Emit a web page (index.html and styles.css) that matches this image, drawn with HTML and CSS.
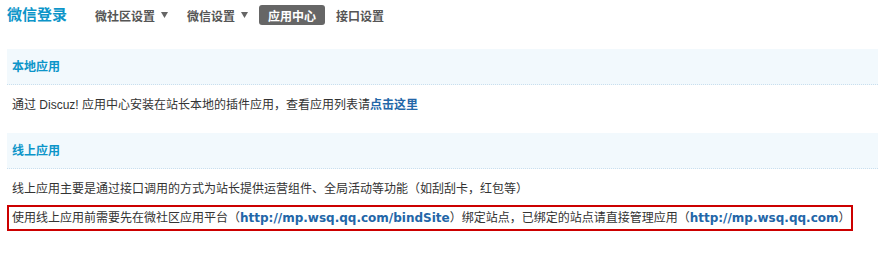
FILE: index.html
```html
<!DOCTYPE html>
<html lang="zh-CN">
<head>
    <meta charset="UTF-8">
    <title>应用中心</title>
    <link rel="stylesheet" href="styles.css">
</head>
<body>
    <div class="container">
        <div class="itemtitle">
            <h3>微信登录</h3>
            <ul class="tab1">
                <li><a href="#">微社区设置<svg class="arrow" width="7" height="6" viewBox="0 0 7 6"><path d="M0 0H7L3.5 6Z"/></svg></a></li>
                <li><a href="#">微信设置<svg class="arrow" width="7" height="6" viewBox="0 0 7 6"><path d="M0 0H7L3.5 6Z"/></svg></a></li>
                <li class="current"><a href="#">应用中心</a></li>
                <li><a href="#">接口设置</a></li>
            </ul>
        </div>

        <div class="partition">本地应用</div>
        <div class="tip-row first">
            通过 Discuz! 应用中心安装在站长本地的插件应用，查看应用列表请<a class="link" href="#">点击这里</a>
        </div>

        <div class="partition">线上应用</div>
        <div class="tip-row">
            线上应用主要是通过接口调用的方式为站长提供运营组件、全局活动等功能（如刮刮卡，红包等）
        </div>
        <div class="notice">
            使用线上应用前需要先在微社区应用平台（<a class="url" href="#">http://mp.wsq.qq.com/bindSite</a>）绑定站点，已绑定的站点请直接管理应用（<a class="url" href="#">http://mp.wsq.qq.com</a>）
        </div>
    </div>
</body>
</html>
```

FILE: styles.css
```css
body {
    margin: 0;
    padding: 0;
    background: #FFFFFF;
    color: #333333;
    font-family: "Liberation Sans", "Noto Sans CJK SC", sans-serif;
    font-size: 12px;
}
a {
    text-decoration: none;
}
.container {
    padding-left: 7px;
}
.itemtitle {
    display: flex;
    height: 49px;
    align-items: flex-start;
}
.itemtitle h3 {
    margin: 5px 20px 0 0;
    color: #0C95C9;
    font-size: 15px;
    font-weight: bold;
    line-height: 20px;
}
.tab1 {
    display: flex;
    list-style: none;
    margin: 5px 0 0 0;
    padding: 0;
}
.tab1 li {
    margin-right: 3px;
}
.tab1 a {
    display: flex;
    align-items: center;
    height: 20px;
    padding: 0 8px;
    color: #555555;
    font-weight: bold;
    border-radius: 3px;
}
.tab1 .arrow {
    margin-left: 6px;
    fill: #666666;
}
.tab1 .current a {
    background: #666666;
    color: #FFFFFF;
    padding: 0 9px;
}
.partition {
    background: #F2F9FD;
    border-bottom: 1px dotted #C9DFEE;
    color: #0C95C9;
    font-weight: bold;
    height: 35px;
    line-height: 37px;
    padding-left: 5px;
}
.tip-row {
    padding: 12px 5px 0;
    line-height: 16px;
}
.tip-row.first {
    height: 36px;
}
.link, .url {
    color: #2366A8;
    font-weight: bold;
}
.url {
    font-family: "DejaVu Sans", sans-serif;
}
.notice {
    display: inline-block;
    margin-top: 8px;
    padding: 0 0 0 3px;
    border: 2px solid #CC0000;
    line-height: 22px;
}
```
